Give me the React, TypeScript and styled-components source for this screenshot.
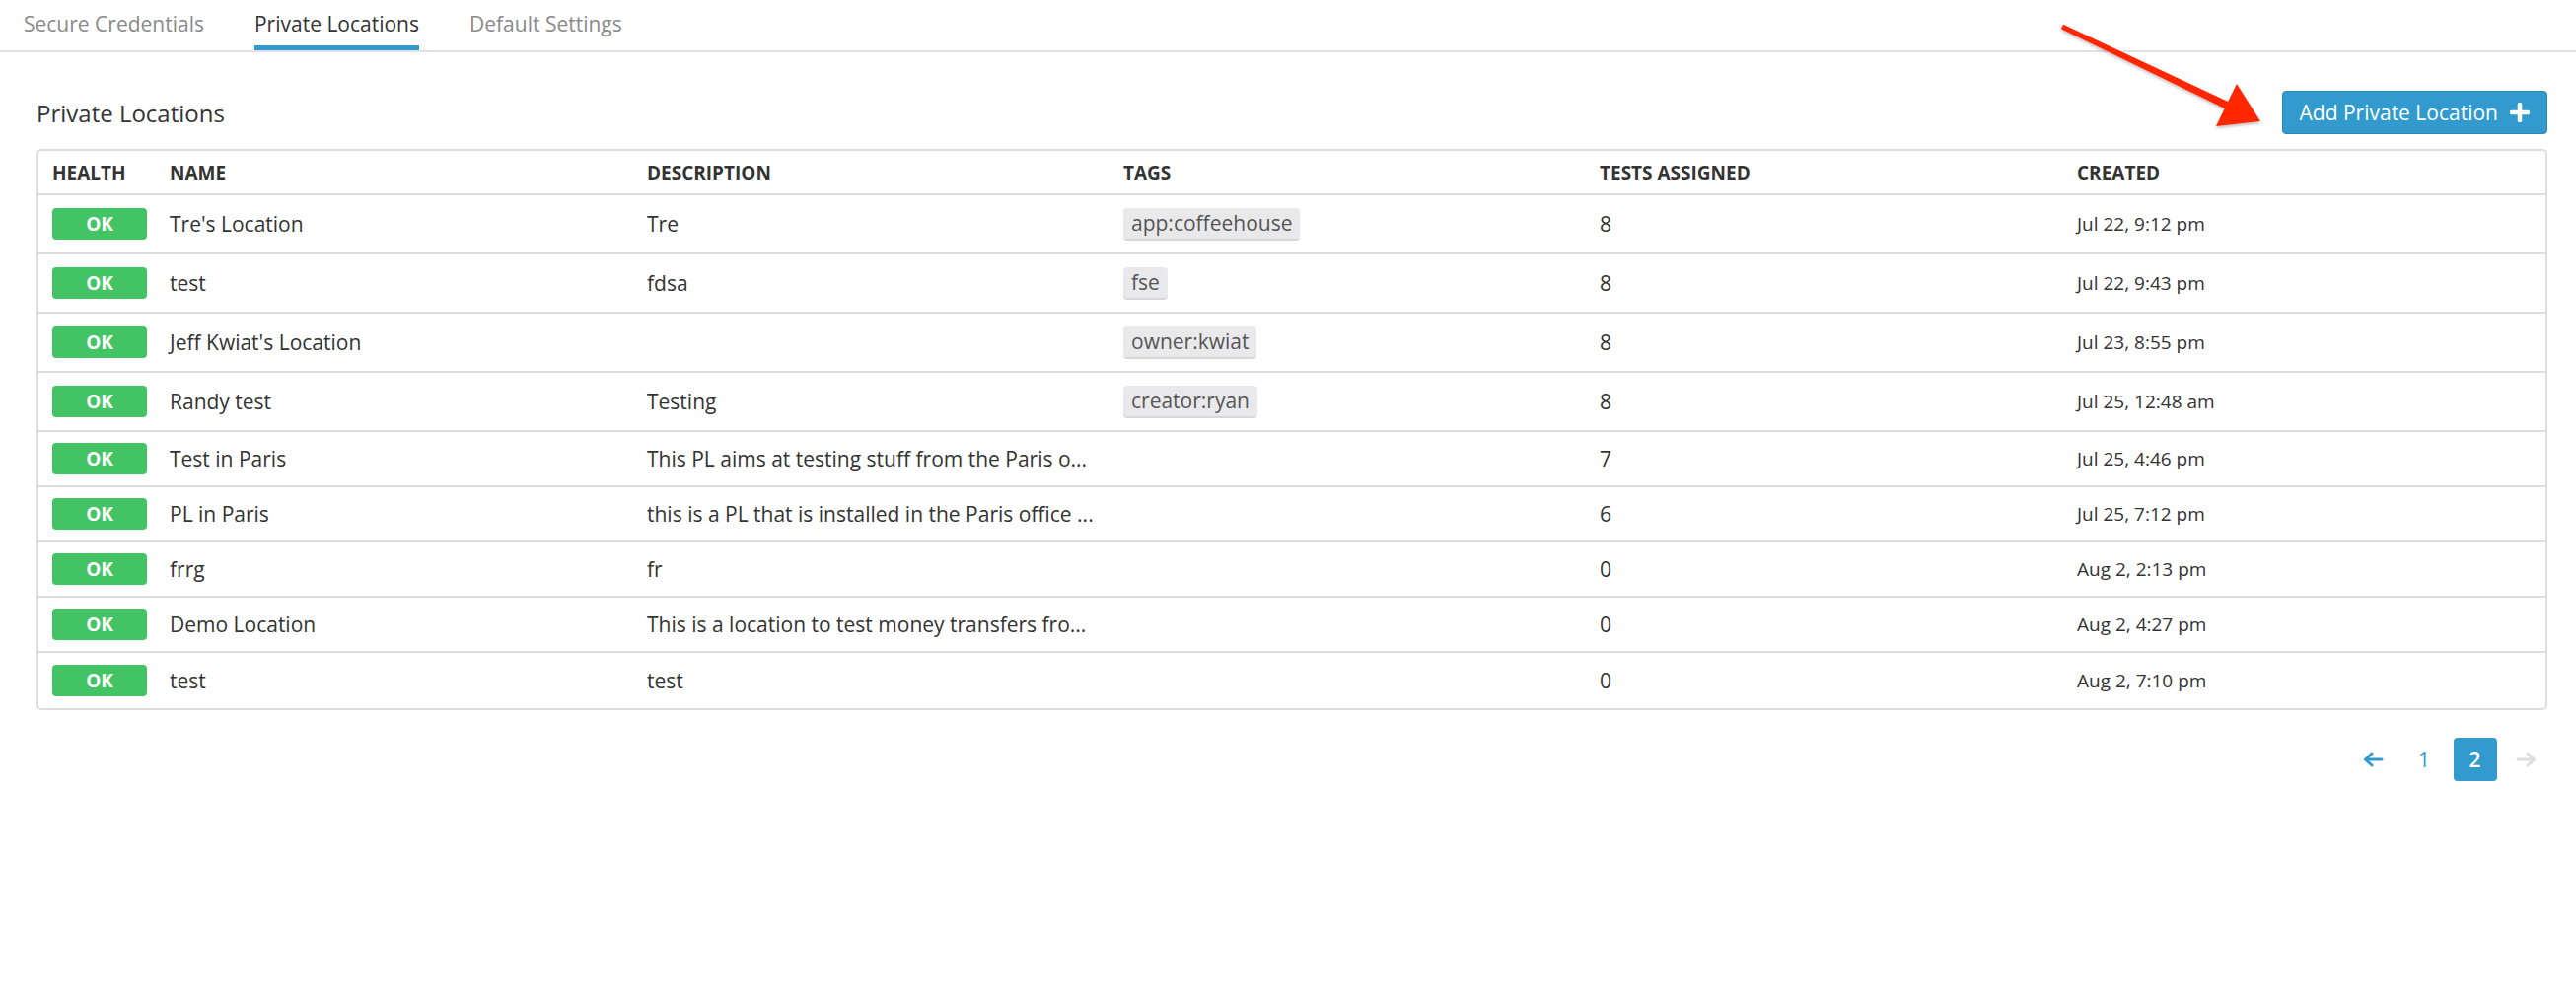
import React from "react";
import styled, { createGlobalStyle } from "styled-components";

const GlobalStyle = createGlobalStyle`
  html, body { margin: 0; padding: 0; background: #ffffff; }
  body {
    font-family: "Open Sans", "Noto Sans", "DejaVu Sans", sans-serif;
    color: #333333;
  }
  * { box-sizing: border-box; }
`;

const Page = styled.div`
  position: relative;
  width: 2612px;
  min-height: 1022px;
`;

const TabBar = styled.nav`
  display: flex;
  gap: 51px;
  padding-left: 24px;
  border-bottom: 2px solid #e1e1e5;
`;

const Tab = styled.div<{ $active?: boolean }>`
  padding: 10px 0 8px;
  font-size: 21px;
  line-height: 28px;
  color: ${(p) => (p.$active ? "#333333" : "#8a8a8a")};
  border-bottom: 5px solid ${(p) => (p.$active ? "#339acd" : "transparent")};
`;

const Content = styled.main`
  padding: 0 29px 0 37px;
`;

const Header = styled.div`
  margin-top: 39px;
  height: 44px;
  display: flex;
  align-items: center;
  justify-content: space-between;
`;

const Title = styled.h2`
  margin: 0;
  font-size: 24px;
  font-weight: 400;
  color: #333333;
`;

const AddButton = styled.button`
  height: 44px;
  padding: 0 17px;
  display: inline-flex;
  align-items: center;
  gap: 12px;
  background: #339acd;
  border: 1px solid #2a86b6;
  border-radius: 4px;
  color: #ffffff;
  font-family: inherit;
  font-size: 21px;
`;

const Table = styled.div`
  margin-top: 15px;
  border: 2px solid #dcdce1;
  border-radius: 5px;
`;

const columns = "119px 484px 483px 483px 484px 1fr";

const HeadRow = styled.div`
  display: grid;
  grid-template-columns: ${columns};
  align-items: center;
  height: 45px;
  border-bottom: 2px solid #dcdce1;
`;

const HeadCell = styled.div`
  padding-left: 14px;
  font-size: 19px;
  font-weight: 700;
  line-height: 26px;
  color: #333333;
  text-transform: uppercase;
`;

const Row = styled.div<{ $h: number }>`
  display: grid;
  grid-template-columns: ${columns};
  align-items: center;
  height: ${(p) => p.$h}px;
  border-bottom: 2px solid #dcdce1;
  &:last-child {
    border-bottom: none;
  }
`;

const Cell = styled.div<{ $small?: boolean }>`
  padding-left: 14px;
  font-size: ${(p) => (p.$small ? 19 : 21)}px;
  line-height: 28px;
  color: #333333;
  white-space: nowrap;
  overflow: hidden;
`;

const Badge = styled.span`
  display: flex;
  align-items: center;
  justify-content: center;
  width: 96px;
  height: 32px;
  border-radius: 4px;
  background: #42c465;
  color: #ffffff;
  font-size: 19px;
  font-weight: 700;
`;

const Tag = styled.span`
  display: inline-block;
  height: 33px;
  padding: 0 8px;
  line-height: 31px;
  background: #e9e9ec;
  border-bottom: 2px solid #d6d6db;
  border-radius: 4px;
  color: #555555;
  font-size: 21px;
`;

const Pagination = styled.div`
  margin-top: 28px;
  display: flex;
  justify-content: flex-end;
  gap: 7.5px;
`;

const PageItem = styled.div<{ $active?: boolean; $disabled?: boolean }>`
  width: 44px;
  height: 44px;
  display: flex;
  align-items: center;
  justify-content: center;
  border-radius: 4px;
  font-size: 21px;
  font-weight: ${(p) => (p.$active ? 600 : 400)};
  background: ${(p) => (p.$active ? "#339acd" : "transparent")};
  color: ${(p) => (p.$active ? "#ffffff" : p.$disabled ? "#dcdce1" : "#339acd")};
`;

const Annotation = styled.svg`
  position: absolute;
  left: 2080px;
  top: 15px;
  overflow: visible;
  pointer-events: none;
`;

type Loc = {
  name: string;
  desc: string;
  tag?: string;
  tests: number;
  created: string;
};

const locations: Loc[] = [
  { name: "Tre's Location", desc: "Tre", tag: "app:coffeehouse", tests: 8, created: "Jul 22, 9:12 pm" },
  { name: "test", desc: "fdsa", tag: "fse", tests: 8, created: "Jul 22, 9:43 pm" },
  { name: "Jeff Kwiat's Location", desc: "", tag: "owner:kwiat", tests: 8, created: "Jul 23, 8:55 pm" },
  { name: "Randy test", desc: "Testing", tag: "creator:ryan", tests: 8, created: "Jul 25, 12:48 am" },
  { name: "Test in Paris", desc: "This PL aims at testing stuff from the Paris o...", tests: 7, created: "Jul 25, 4:46 pm" },
  { name: "PL in Paris", desc: "this is a PL that is installed in the Paris office ...", tests: 6, created: "Jul 25, 7:12 pm" },
  { name: "frrg", desc: "fr", tests: 0, created: "Aug 2, 2:13 pm" },
  { name: "Demo Location", desc: "This is a location to test money transfers fro...", tests: 0, created: "Aug 2, 4:27 pm" },
  { name: "test", desc: "test", tests: 0, created: "Aug 2, 7:10 pm" },
];

const PlusIcon = () => (
  <svg width="20" height="20" viewBox="0 0 20 20">
    <path d="M10 2v16M2 10h16" stroke="#ffffff" strokeWidth="4.5" strokeLinecap="round" />
  </svg>
);

const ArrowIcon = ({ dir }: { dir: "left" | "right" }) => (
  <svg width="21" height="16" viewBox="0 0 21 16" style={dir === "right" ? { transform: "scaleX(-1)" } : undefined}>
    <path
      d="M19 8H3M9 2L2.5 8L9 14"
      stroke="currentColor"
      strokeWidth="3"
      fill="none"
      strokeLinecap="round"
      strokeLinejoin="round"
    />
  </svg>
);

export default function App() {
  return (
    <Page>
      <GlobalStyle />
      <TabBar>
        <Tab>Secure Credentials</Tab>
        <Tab $active>Private Locations</Tab>
        <Tab>Default Settings</Tab>
      </TabBar>
      <Content>
        <Header>
          <Title>Private Locations</Title>
          <AddButton>
            Add Private Location
            <PlusIcon />
          </AddButton>
        </Header>
        <Table>
          <HeadRow>
            <HeadCell>Health</HeadCell>
            <HeadCell>Name</HeadCell>
            <HeadCell>Description</HeadCell>
            <HeadCell>Tags</HeadCell>
            <HeadCell>Tests Assigned</HeadCell>
            <HeadCell>Created</HeadCell>
          </HeadRow>
          {locations.map((l, i) => (
            <Row key={i} $h={l.tag ? 60 : 56}>
              <Cell>
                <Badge>OK</Badge>
              </Cell>
              <Cell>{l.name}</Cell>
              <Cell>{l.desc}</Cell>
              <Cell>{l.tag ? <Tag>{l.tag}</Tag> : null}</Cell>
              <Cell>{l.tests}</Cell>
              <Cell $small>{l.created}</Cell>
            </Row>
          ))}
        </Table>
        <Pagination>
          <PageItem>
            <ArrowIcon dir="left" />
          </PageItem>
          <PageItem>1</PageItem>
          <PageItem $active>2</PageItem>
          <PageItem $disabled>
            <ArrowIcon dir="right" />
          </PageItem>
        </Pagination>
      </Content>
      <Annotation width="225" height="125" viewBox="0 0 225 125">
        <defs>
          <filter id="arrowShadow" x="-10%" y="-10%" width="120%" height="130%">
            <feDropShadow dx="0" dy="2" stdDeviation="1.5" floodColor="#000000" floodOpacity="0.25" />
          </filter>
        </defs>
        <polygon
          points="12.1,9.75 179.2,87.9 188,70 212,108 167,113 175.8,95.1 9.9,14.25"
          fill="#ff2600"
          filter="url(#arrowShadow)"
        />
      </Annotation>
    </Page>
  );
}
